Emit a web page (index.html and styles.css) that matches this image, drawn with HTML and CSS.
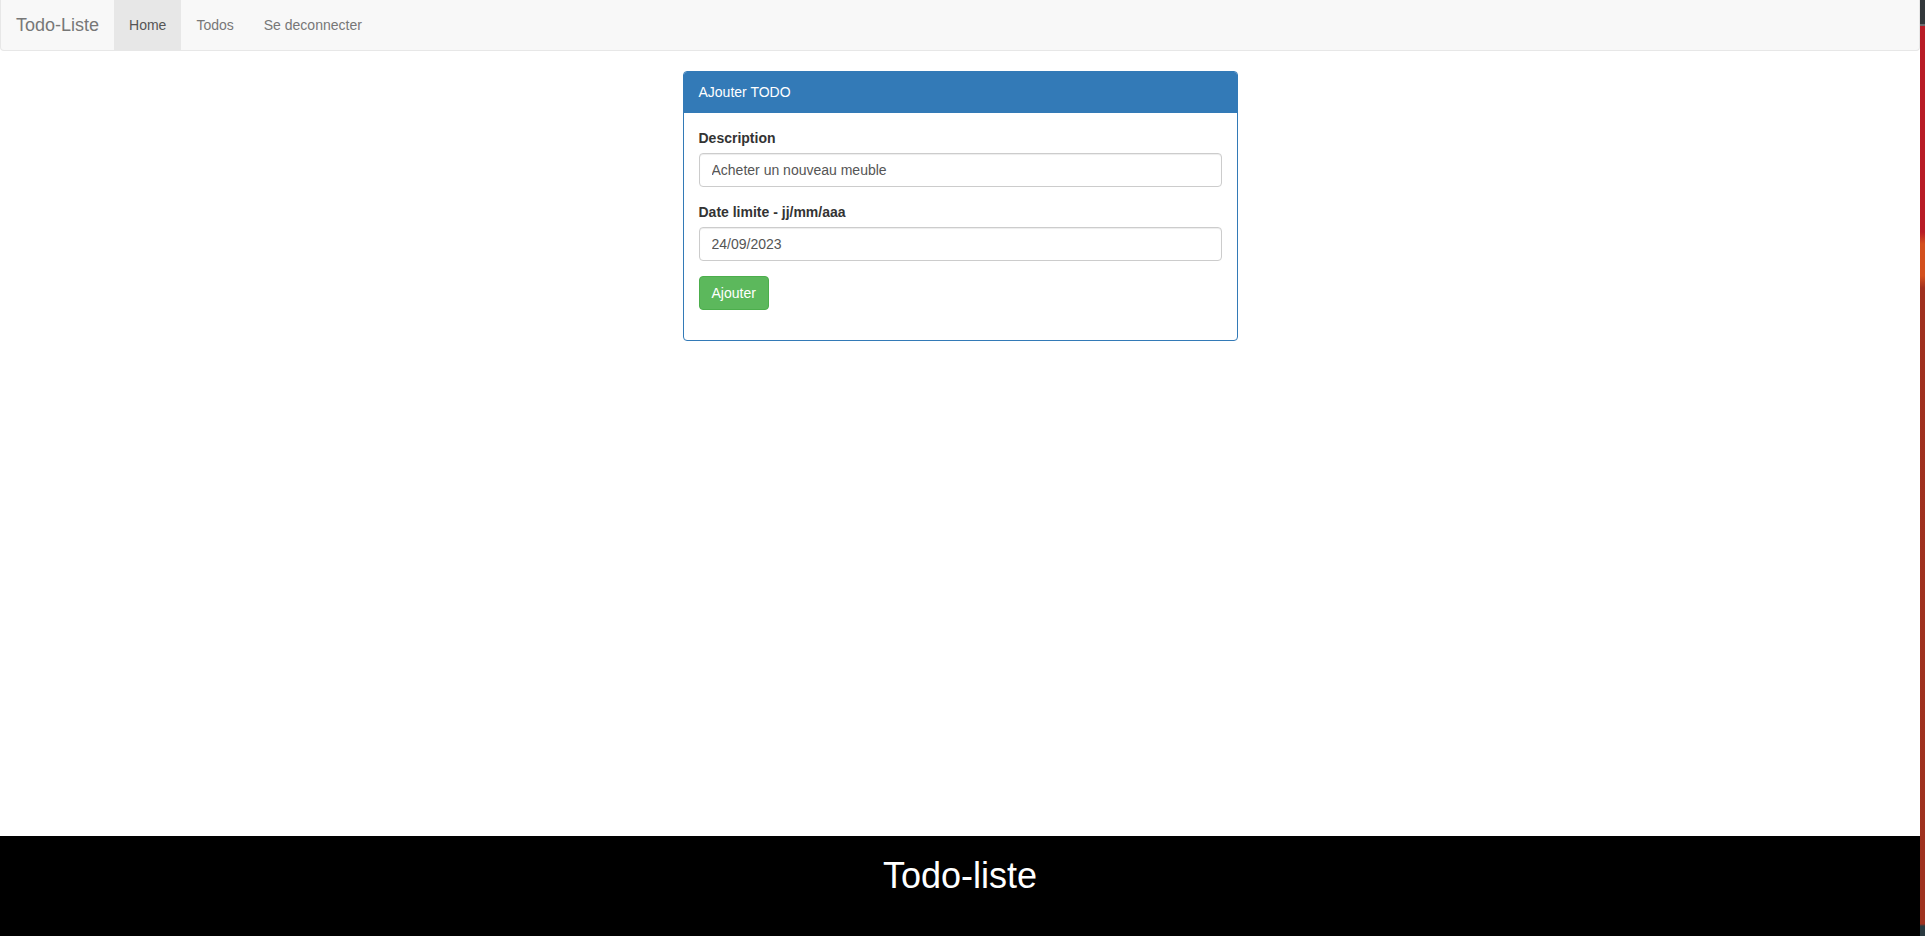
FILE: index.html
```html
<!DOCTYPE html>
<html lang="fr">
<head>
    <meta charset="UTF-8">
    <meta name="viewport" content="width=device-width, initial-scale=1.0">
    <title>Todo-Liste</title>
    <link rel="stylesheet" href="styles.css">
</head>
<body>

<div class="screen">
    <div class="page">
        <!-- barre de navigation -->
        <nav class="navbar">
            <a class="navbar-brand" href="#">Todo-Liste</a>
            <ul class="nav">
                <li class="active"><a href="#">Home</a></li>
                <li><a href="#">Todos</a></li>
                <li><a href="#">Se deconnecter</a></li>
            </ul>
        </nav>

        <div class="container">
            <div class="panel">
                <div class="panel-heading">AJouter TODO</div>
                <div class="panel-body">
                    <form>
                        <div class="form-group">
                            <label for="description">Description</label>
                            <input type="text" id="description" class="form-control" value="Acheter un nouveau meuble">
                        </div>
                        <div class="form-group">
                            <label for="date">Date limite - jj/mm/aaa</label>
                            <input type="text" id="date" class="form-control" value="24/09/2023">
                        </div>
                        <div class="form-group">
                            <button type="button" class="btn-success">Ajouter</button>
                        </div>
                    </form>
                </div>
            </div>
        </div>

        <!-- pied de page -->
        <footer class="footer">
            <h1>Todo-liste</h1>
        </footer>
    </div>
    <div class="edge"></div>
</div>

</body>
</html>
```

FILE: styles.css
```css
* {
    box-sizing: border-box;
}

body {
    margin: 0;
    font-family: "Liberation Sans", Arial, sans-serif;
    font-size: 14px;
    line-height: 20px;
    color: #333;
    background: #fff;
}

.screen {
    display: flex;
    height: 100vh;
}

.page {
    flex: 1;
    display: flex;
    flex-direction: column;
}

.edge {
    width: 5px;
    background: linear-gradient(to bottom,
        #33383b 0, #33383b 24px, #6a6d70 24px, #6a6d70 26px,
        #b81c26 26px, #b81c26 232px, #d4501e 244px, #d4501e 276px,
        #a0301f 288px, #9f321f 924px, #2a3a40 926px);
}

/* barre de navigation */
.navbar {
    display: flex;
    min-height: 51px;
    margin-bottom: 20px;
    background: #f8f8f8;
    border: 1px solid #e7e7e7;
    border-top-width: 0;
    border-radius: 0 0 4px 4px;
}

.navbar-brand {
    padding: 15px;
    height: 50px;
    font-size: 18px;
    line-height: 20px;
    color: #777;
    text-decoration: none;
}

.nav {
    display: flex;
    list-style: none;
    margin: 0;
    padding: 0;
}

.nav a {
    display: block;
    padding: 15px;
    color: #777;
    text-decoration: none;
}

.nav .active a {
    background: #e7e7e7;
    color: #555;
}

.container {
    width: 555px;
    margin: 0 auto;
    flex: 1;
}

.panel {
    border: 1px solid #337ab7;
    border-radius: 4px;
    margin-bottom: 20px;
}

.panel-heading {
    padding: 10px 15px;
    background: #337ab7;
    color: #fff;
    border-bottom: 1px solid #337ab7;
    border-radius: 3px 3px 0 0;
}

.panel-body {
    padding: 15px;
}

.form-group {
    margin-bottom: 15px;
}

.form-group label {
    display: block;
    margin-bottom: 5px;
    font-weight: bold;
}

.form-control {
    display: block;
    width: 100%;
    height: 34px;
    padding: 6px 12px;
    font-family: inherit;
    font-size: 14px;
    color: #555;
    border: 1px solid #ccc;
    border-radius: 4px;
    box-shadow: inset 0 1px 1px rgba(0, 0, 0, 0.075);
}

.btn-success {
    height: 34px;
    padding: 6px 12px;
    font-family: inherit;
    font-size: 14px;
    color: #fff;
    background: #5cb85c;
    border: 1px solid #4cae4c;
    border-radius: 4px;
    cursor: pointer;
}

/* pied de page */
.footer {
    height: 100px;
    background: #000;
    color: #fff;
    text-align: center;
}

.footer h1 {
    margin: 20px 0 0;
    font-size: 36px;
    font-weight: normal;
    line-height: 40px;
}
```
